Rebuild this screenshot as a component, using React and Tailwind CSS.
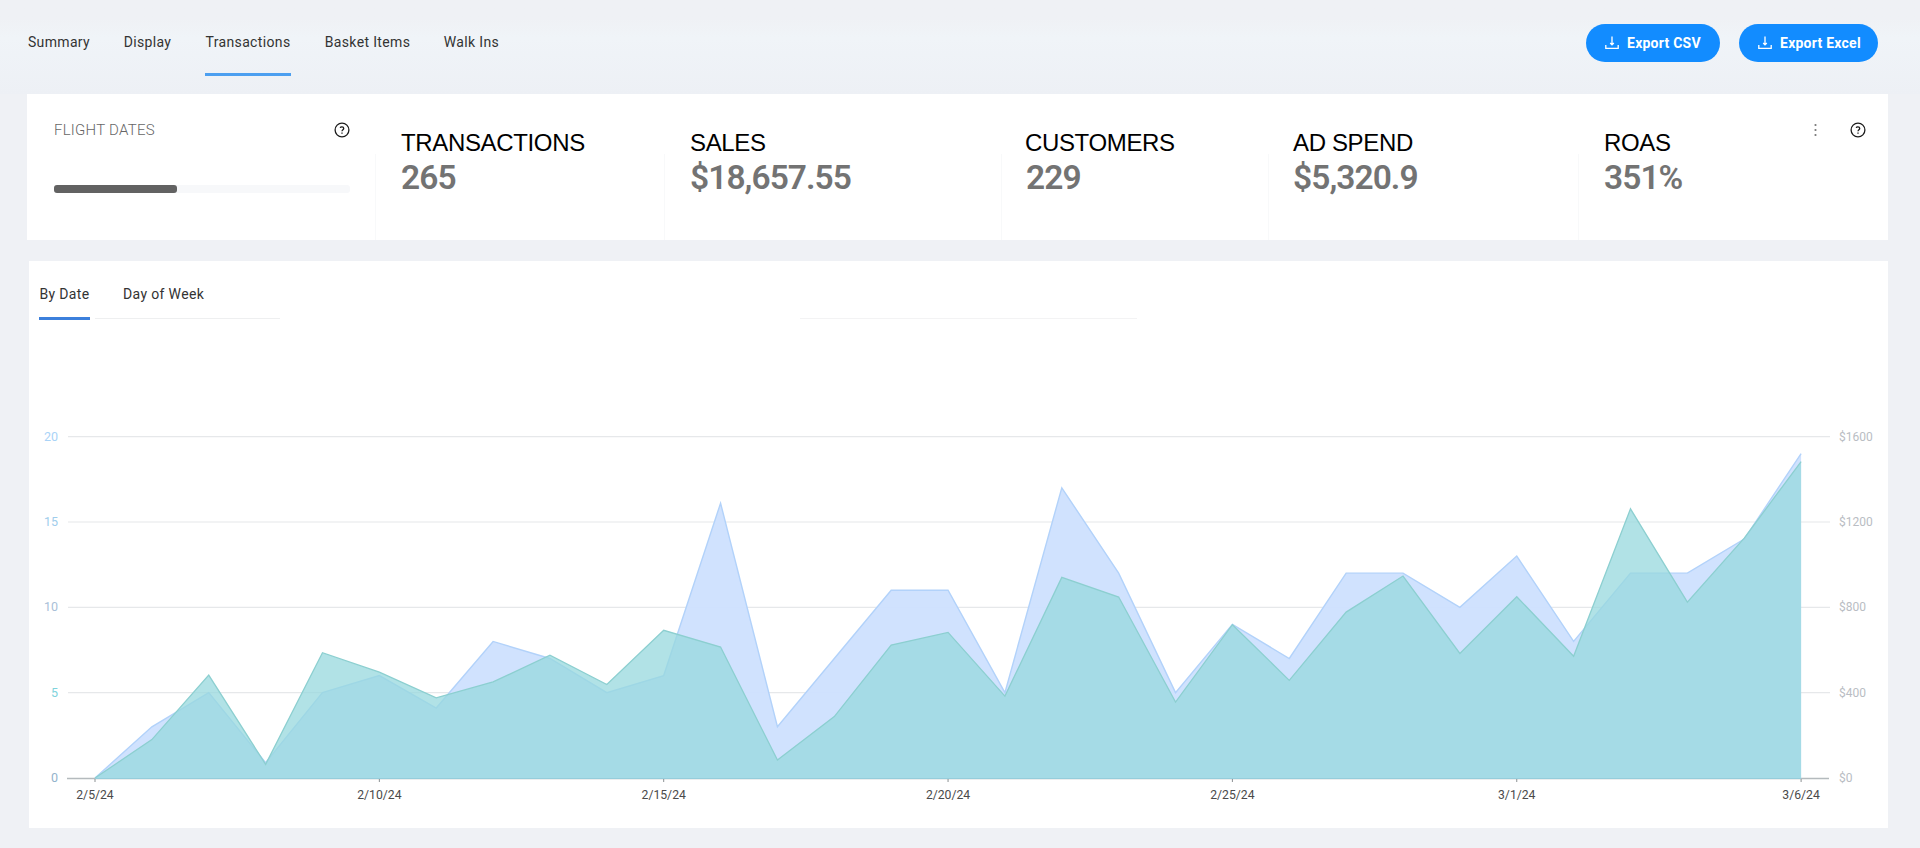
import React from "react";

const NAV = [
  { label: "Summary", width: "w-[62px]" },
  { label: "Display", width: "w-[47px]" },
  { label: "Transactions", width: "w-[86px]", active: true },
  { label: "Basket Items", width: "w-[85px]" },
  { label: "Walk Ins", width: "w-[55px]" },
];

const METRICS = [
  { label: "TRANSACTIONS", value: "265", cell: "w-[288px] pl-[25px]", inset: "" },
  { label: "SALES", value: "$18,657.55", cell: "w-[336px] pl-[25px]", inset: "" },
  { label: "CUSTOMERS", value: "229", cell: "w-[266px] pl-[23px]", inset: "pl-px" },
  { label: "AD SPEND", value: "$5,320.9", cell: "w-[309px] pl-[24px]", inset: "" },
  { label: "ROAS", value: "351%", cell: "flex-1 pl-[25px]", inset: "" },
];

// Chart space is measured from the chart panel's own top-left corner.
const X0 = 66;
const STEP = 56.87;
const BASE = 458;
const UNIT = 17.07;

const TRANSACTIONS = [
  0, 3, 5, 0.9, 5, 6, 4.1, 8, 7, 5, 6, 16.1, 3, 7, 11, 11, 5, 17, 12, 5, 9, 7, 12, 12, 10, 13, 8,
  12, 12, 14, 19,
];
const SALES = [
  0, 2.25, 6.03, 0.8, 7.34, 6.2, 4.7, 5.63, 7.19, 5.48, 8.65, 7.67, 1.05, 3.6, 7.79, 8.53, 4.8,
  11.75, 10.6, 4.45, 8.98, 5.72, 9.72, 11.83, 7.3, 10.62, 7.13, 15.77, 10.3, 14.05, 18.54,
];

const points = (data) => data.map((v, i) => `${X0 + i * STEP},${BASE - v * UNIT}`).join(" ");
const area = (data) => `${X0},${BASE} ${points(data)} ${X0 + 30 * STEP},${BASE}`;

const TICKS = ["2/5/24", "2/10/24", "2/15/24", "2/20/24", "2/25/24", "3/1/24", "3/6/24"];
const ROWS = [
  { left: "20", right: "$1600", color: "#a9d3f7" },
  { left: "15", right: "$1200", color: "#9fcdec" },
  { left: "10", right: "$800", color: "#a9bfd8" },
  { left: "5", right: "$400", color: "#7fd3dc" },
  { left: "0", right: "$0", color: "#93b3cc" },
];

function HelpIcon() {
  return (
    <svg width="16" height="16" viewBox="0 0 16 16" fill="none" stroke="#1c1c1c" strokeWidth="1.3">
      <circle cx="8" cy="8" r="6.9" />
      <path d="M6.2 5.9C6.6 4.6 9.6 4.5 9.7 6.4C9.7 7.7 8.1 7.7 8 9.2" />
      <path d="M8 10.6V11.7" />
    </svg>
  );
}

function DownloadIcon() {
  return (
    <svg width="14" height="14" viewBox="0 0 14 14" fill="none" stroke="#fff" strokeWidth="1.3">
      <path d="M7 0.5V8.6M5.2 7L7 8.8L8.8 7" />
      <path d="M0.8 8.9V12.3H13.2V8.9" />
    </svg>
  );
}

function ExportButton({ children, className }) {
  return (
    <button
      className={`flex h-[38px] items-center rounded-full bg-[#128cff] pl-[19px] text-[14px] font-bold text-white ${className}`}
    >
      <DownloadIcon />
      <span className="ml-[8px] whitespace-nowrap tracking-[0.25px]">{children}</span>
    </button>
  );
}

function Chart() {
  return (
    <svg className="block" width="1859" height="507" viewBox="0 0 1859 507" fontSize="12.5">
      {ROWS.map((row, i) => {
        const y = BASE - (4 - i) * 85.33;
        return (
          <g key={row.left}>
            {i < 4 && <line x1="39" x2="1801" y1={y} y2={y} stroke="#e6e8ea" strokeWidth="1.2" />}
            <text x="29" y={y + 4} textAnchor="end" fill={row.color}>{row.left}</text>
            <text x="1810" y={y + 4} fill="#b9bdc3" fontSize="12">{row.right}</text>
          </g>
        );
      })}
      <line x1="38" x2="1800" y1={BASE + 0.5} y2={BASE + 0.5} stroke="#b4babd" strokeWidth="1.5" />
      <polygon points={area(TRANSACTIONS)} fill="#cee1fe" fillOpacity="0.96" />
      <polyline points={points(TRANSACTIONS)} fill="none" stroke="#b2d2fa" strokeWidth="1.4" />
      <polygon points={area(SALES)} fill="#97d8de" fillOpacity="0.75" />
      <polyline points={points(SALES)} fill="none" stroke="#8ccfd0" strokeWidth="1.3" />
      <line x1={X0} x2={X0 + 30 * STEP} y1={BASE + 0.5} y2={BASE + 0.5} stroke="#96cddb" />
      {TICKS.map((t, i) => {
        const x = X0 + i * 5 * STEP;
        return (
          <g key={t}>
            <line x1={x} x2={x} y1={BASE + 1} y2={BASE + 4} stroke="#8b9093" />
            <text x={x} y={BASE + 20.5} textAnchor="middle" fill="#4a4a4a" fontSize="12.2">{t}</text>
          </g>
        );
      })}
    </svg>
  );
}

export default function App() {
  return (
    <div className="h-[848px] w-[1920px] overflow-hidden bg-[#eff1f5] font-['Roboto',sans-serif]">
      <header className="flex h-[94px] items-start justify-between bg-linear-to-b from-[#eff1f5] from-20% via-[#f0f4f8] via-40% to-[#edf0f5] pr-[42px] pl-[28px]">
        <nav className="flex gap-[34px] pt-[24px] text-[14px] text-[#333]">
          {NAV.map((item) => (
            <a
              key={item.label}
              className={`flex h-[52px] justify-center border-b-[3px] pt-[8px] whitespace-nowrap tracking-[0.35px] ${item.width} ${item.active ? "border-[#4c9ff0]" : "border-transparent"}`}
            >
              {item.label}
            </a>
          ))}
        </nav>
        <div className="flex gap-[19px] pt-[24px]">
          <ExportButton className="w-[134px]">Export CSV</ExportButton>
          <ExportButton className="w-[139px]">Export Excel</ExportButton>
        </div>
      </header>

      <section className="ml-[27px] flex h-[146px] w-[1861px] bg-white">
        <div className="w-[348px] pt-[28px] pr-[25px] pl-[27px]">
          <div className="flex h-[16px] items-center justify-between">
            <span className="text-[15px] font-light tracking-[0.25px] text-[#666]">FLIGHT DATES</span>
            <HelpIcon />
          </div>
          <div className="mt-[47px] h-[8px] rounded-[3px] bg-[#f7f8fa]">
            <div className="h-full w-[123px] rounded-[3px] bg-[#626262]" />
          </div>
        </div>
        {METRICS.map((m) => (
          <div key={m.label} className="flex">
            <div className="mt-[60px] w-px bg-[#f8f9fa]" />
            <div className={`pt-[35px] whitespace-nowrap ${m.cell}`}>
              <div className="font-['Liberation_Sans',sans-serif] text-[24px] leading-[28px] tracking-[-0.35px] text-black">
                {m.label}
              </div>
              <div className={`mt-[1px] text-[33.5px] leading-[40px] font-semibold tracking-[-0.95px] text-[#737373] ${m.inset}`}>
                {m.value}
              </div>
            </div>
          </div>
        ))}
        <div className="mt-[28px] ml-auto flex h-[16px] items-center gap-[33px] pr-[22px]">
          <svg width="3" height="14" viewBox="0 0 3 14" fill="#777">
            <circle cx="1.5" cy="2" r="1.1" />
            <circle cx="1.5" cy="7" r="1.1" />
            <circle cx="1.5" cy="12" r="1.1" />
          </svg>
          <HelpIcon />
        </div>
      </section>

      <section className="mt-[21px] ml-[29px] h-[567px] w-[1859px] bg-white">
        <div className="flex h-[59px] items-end pl-[10px] text-[14px] text-[#333]">
          <div className="flex h-[36px] w-[51px] justify-center border-b-[3px] border-[#3c80dc] whitespace-nowrap tracking-[0.35px]">
            By Date
          </div>
          <div className="flex h-[36px] w-[190px] border-b-[3px] border-transparent pl-[33px] whitespace-nowrap tracking-[0.35px]">
            Day of Week
          </div>
        </div>
        <div className="-mt-[2px] flex h-[3px]">
          <div className="ml-[66px] h-px w-[185px] bg-[#eeeff0]" />
          <div className="ml-[520px] h-px w-[337px] bg-[#f3f3f4]" />
        </div>
        <div className="-mt-[1px]">
          <Chart />
        </div>
      </section>
    </div>
  );
}
